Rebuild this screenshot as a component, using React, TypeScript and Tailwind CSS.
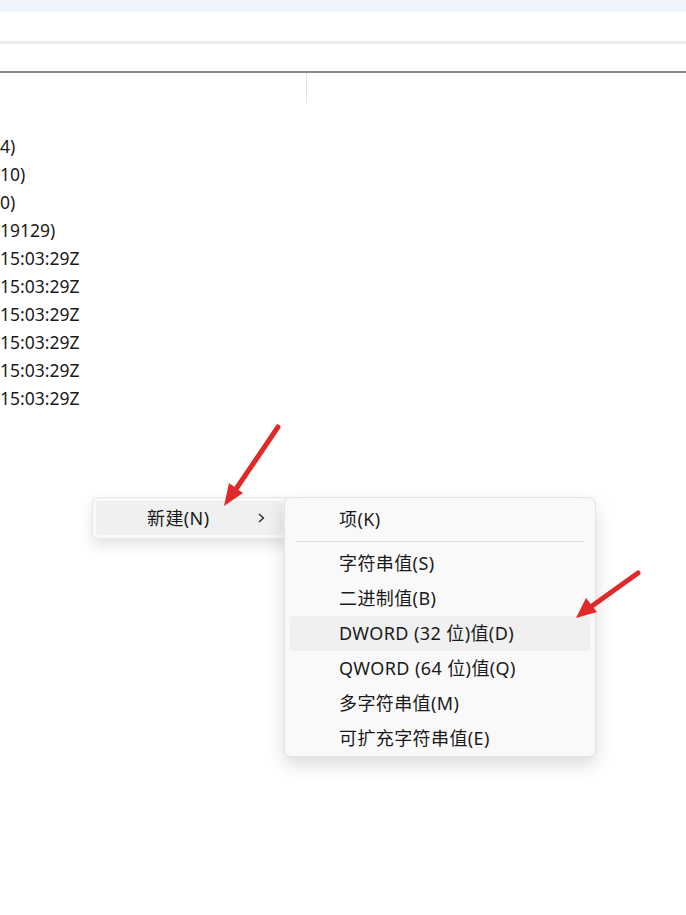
import React from "react";

const leftLines = ["4)", "10)", "0)", "19129)", "15:03:29Z", "15:03:29Z", "15:03:29Z", "15:03:29Z", "15:03:29Z", "15:03:29Z"];

const subItems = [
  { label: "字符串值(S)" },
  { label: "二进制值(B)" },
  { label: "DWORD (32 位)值(D)", active: true },
  { label: "QWORD (64 位)值(Q)" },
  { label: "多字符串值(M)" },
  { label: "可扩充字符串值(E)" },
];

export default function App() {
  const font = { fontFamily: '"Noto Sans", "Noto Sans CJK SC", sans-serif' };
  return (
    <div className="relative w-[686px] h-[915px] bg-white overflow-hidden text-[#1a1a1a]" style={font}>
      <div className="h-[12px] bg-[#eff3fa]" />
      <div className="h-[29px]" />
      <div className="h-[3px] bg-[#ececec]" />
      <div className="h-[27px]" />
      <div className="h-[2px] bg-[#8a8a8a]" />
      <div className="flex h-[30px]">
        <div className="w-[306px]" />
        <div className="w-px bg-[#e3e3e3]" />
      </div>
      <div className="pt-[29px] flex flex-col">
        {leftLines.map((t, i) => (
          <div key={i} className="h-[28px] leading-[28px] text-[17.5px]">
            {t}
          </div>
        ))}
      </div>

      {/* Parent menu */}
      <div className="absolute left-[92px] top-[497px] w-[200px] h-[42px] rounded-[6px] bg-[#f9f9f9] border border-[#e6e6e6] shadow-[0_6px_14px_rgba(0,0,0,0.12)] p-[3px] pr-[8px]">
        <div className="h-full rounded-[4px] bg-[#f0f0f0] flex items-center text-[18px] tracking-[0.4px]">
          <span className="ml-[51px]">新建(N)</span>
          <span className="ml-auto mr-[16px] flex">
            <svg width="12" height="14" viewBox="0 0 12 14">
              <path d="M4 3 L8.5 7 L4 11" fill="none" stroke="#222" strokeWidth="1.3" />
            </svg>
          </span>
        </div>
      </div>

      {/* Submenu */}
      <div className="absolute left-[284px] top-[497px] w-[312px] h-[260px] rounded-[7px] bg-[#f9f9f9] border border-[#e3e3e3] shadow-[0_8px_18px_rgba(0,0,0,0.14)] px-[5px] pt-[4px] text-[18px] tracking-[0.4px]">
        <div className="h-[34px] flex items-center pl-[49px]">项(K)</div>
        <div className="h-[10px] flex items-center px-[6px]">
          <div className="h-px w-full bg-[#dcdcdc]" />
        </div>
        {subItems.map((it) => (
          <div
            key={it.label}
            className={`h-[35px] flex items-center pl-[49px] rounded-[4px] ${it.active ? "bg-[#f0f0f0]" : ""}`}
          >
            {it.label}
          </div>
        ))}
      </div>

      {/* Red arrows */}
      <svg className="absolute left-0 top-0 pointer-events-none" width="686" height="915">
        <line x1="278" y1="427" x2="236" y2="489" stroke="#e02a2a" strokeWidth="5" strokeLinecap="round" />
        <polygon points="224,506 229,483 243,493" fill="#e02a2a" />
        <line x1="638" y1="573" x2="592" y2="606" stroke="#e02a2a" strokeWidth="5" strokeLinecap="round" />
        <polygon points="576,618 586,598 597,612" fill="#e02a2a" />
      </svg>
    </div>
  );
}
